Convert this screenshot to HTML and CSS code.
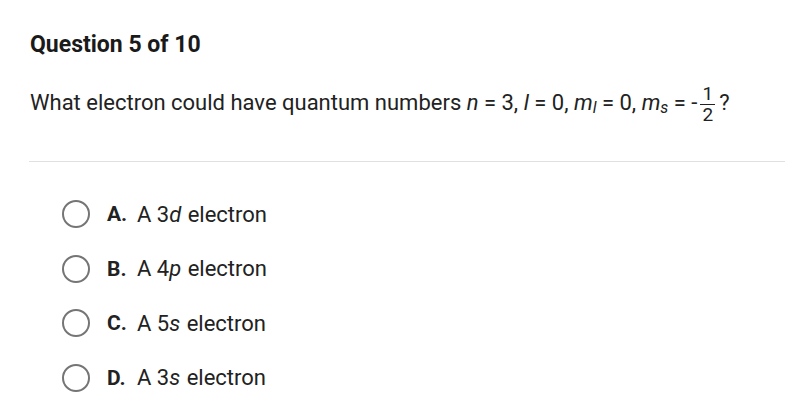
FILE: index.html
```html
<!DOCTYPE html>
<html>
<head>
<meta charset="utf-8">
<link rel="stylesheet" href="styles.css">
</head>
<body>
<div class="page">
  <h1 class="title">Question 5 of 10</h1>
  <p class="question">What electron could have quantum numbers <i>n</i> = 3, <i>l</i> = 0, <i>m<sub>l</sub></i> = 0, <i>m<sub>s</sub></i> = -<span class="frac"><span class="num">1</span><span class="den">2</span></span>?</p>
  <hr class="rule">
  <ul class="options">
    <li class="option"><span class="radio"></span><b class="letter">A.</b><span class="answer">A 3<i>d</i> electron</span></li>
    <li class="option"><span class="radio"></span><b class="letter">B.</b><span class="answer">A 4<i>p</i> electron</span></li>
    <li class="option"><span class="radio"></span><b class="letter">C.</b><span class="answer">A 5<i>s</i> electron</span></li>
    <li class="option"><span class="radio"></span><b class="letter">D.</b><span class="answer">A 3<i>s</i> electron</span></li>
  </ul>
</div>
</body>
</html>
```
FILE: styles.css
```css
html, body {
  margin: 0;
  padding: 0;
  background: #fff;
}
body {
  font-family: Roboto, "Liberation Sans", sans-serif;
  color: #1f1f1f;
}
.page {
  padding: 29px 16px 0 30px;
}
.title {
  margin: 0;
  font-size: 23px;
  font-weight: 700;
  line-height: 32px;
  color: #1a1a1a;
}
.question {
  margin: 24px 0 0 0;
  font-size: 22px;
  line-height: 32px;
  color: #222;
}
.question sub {
  font-size: 16px;
  vertical-align: -3px;
  line-height: 0;
}
.frac {
  display: inline-flex;
  flex-direction: column;
  align-items: center;
  vertical-align: middle;
  font-size: 19px;
  line-height: 18px;
  margin: 0 4px 0 3px;
}
.frac .num {
  border-bottom: 1px solid #222;
  padding: 0 2px 1px;
}
.frac .den {
  padding-top: 1px;
}
.rule {
  margin: 37px 0 0 -1px;
  border: 0;
  border-top: 1px solid #e0e0e0;
  height: 0;
}
.options {
  list-style: none;
  margin: 0;
  padding: 38px 0 0 32px;
}
.option {
  display: flex;
  align-items: center;
  height: 28px;
  margin-bottom: 26.5px;
  font-size: 22px;
  color: #222;
}
.radio {
  width: 24px;
  height: 24px;
  border: 2px solid #757575;
  border-radius: 50%;
  flex: none;
}
.letter {
  margin-left: 17px;
  width: 30px;
  font-weight: 700;
  font-size: 21px;
}
.answer i {
  margin-right: 1px;
}
```
